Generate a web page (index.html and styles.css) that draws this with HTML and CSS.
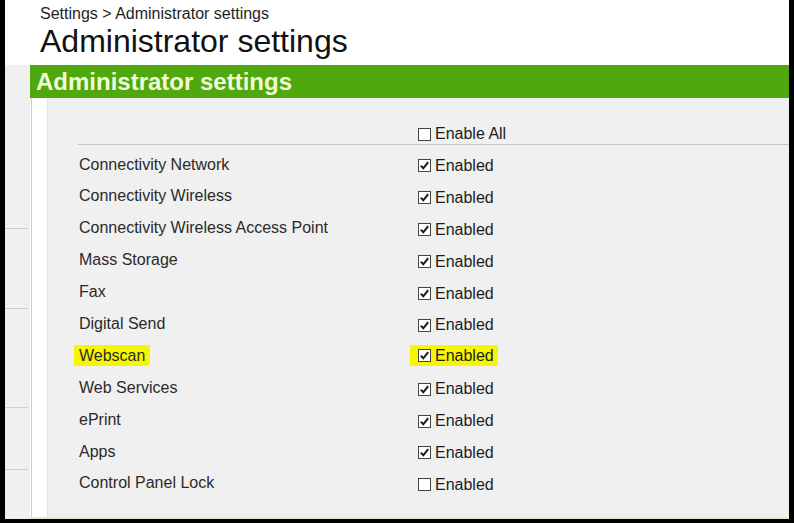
FILE: index.html
```html
<!DOCTYPE html>
<html>
<head>
<meta charset="utf-8">
<link rel="stylesheet" href="styles.css">
</head>
<body>
<div class="frame">
  <header class="top">
    <div class="crumb">Settings &gt; Administrator settings</div>
    <h1 class="title">Administrator settings</h1>
  </header>
  <div class="below">
    <nav class="side">
      <div class="side-item s1"></div>
      <div class="side-item s2"></div>
      <div class="side-item s3"></div>
      <div class="side-item s4"></div>
    </nav>
    <main class="main">
      <h2 class="bar">Administrator settings</h2>
      <div class="panel">
        <div class="strip"></div>
        <div class="content">
          <div class="list">
            <div class="row head">
              <span class="label"></span>
              <span class="opt"><svg class="cb" viewBox="0 0 13 13"><rect x="0.5" y="0.5" width="12" height="12" fill="#fff" stroke="#444"/></svg>Enable All</span>
            </div>
            <div class="row"><span class="label">Connectivity Network</span><span class="opt"><svg class="cb" viewBox="0 0 13 13"><rect x="0.5" y="0.5" width="12" height="12" fill="#fff" stroke="#444"/><path d="M2.8 6.6 L5.3 9.3 L10.2 3.2" fill="none" stroke="#1a1a1a" stroke-width="2"/></svg>Enabled</span></div>
            <div class="row"><span class="label">Connectivity Wireless</span><span class="opt"><svg class="cb" viewBox="0 0 13 13"><rect x="0.5" y="0.5" width="12" height="12" fill="#fff" stroke="#444"/><path d="M2.8 6.6 L5.3 9.3 L10.2 3.2" fill="none" stroke="#1a1a1a" stroke-width="2"/></svg>Enabled</span></div>
            <div class="row"><span class="label">Connectivity Wireless Access Point</span><span class="opt"><svg class="cb" viewBox="0 0 13 13"><rect x="0.5" y="0.5" width="12" height="12" fill="#fff" stroke="#444"/><path d="M2.8 6.6 L5.3 9.3 L10.2 3.2" fill="none" stroke="#1a1a1a" stroke-width="2"/></svg>Enabled</span></div>
            <div class="row"><span class="label">Mass Storage</span><span class="opt"><svg class="cb" viewBox="0 0 13 13"><rect x="0.5" y="0.5" width="12" height="12" fill="#fff" stroke="#444"/><path d="M2.8 6.6 L5.3 9.3 L10.2 3.2" fill="none" stroke="#1a1a1a" stroke-width="2"/></svg>Enabled</span></div>
            <div class="row"><span class="label">Fax</span><span class="opt"><svg class="cb" viewBox="0 0 13 13"><rect x="0.5" y="0.5" width="12" height="12" fill="#fff" stroke="#444"/><path d="M2.8 6.6 L5.3 9.3 L10.2 3.2" fill="none" stroke="#1a1a1a" stroke-width="2"/></svg>Enabled</span></div>
            <div class="row"><span class="label">Digital Send</span><span class="opt"><svg class="cb" viewBox="0 0 13 13"><rect x="0.5" y="0.5" width="12" height="12" fill="#fff" stroke="#444"/><path d="M2.8 6.6 L5.3 9.3 L10.2 3.2" fill="none" stroke="#1a1a1a" stroke-width="2"/></svg>Enabled</span></div>
            <div class="row"><span class="label"><span class="hl hl-label">Webscan</span></span><span class="opt"><span class="hl hl-opt"><svg class="cb" viewBox="0 0 13 13"><rect x="0.5" y="0.5" width="12" height="12" fill="#fff" stroke="#444"/><path d="M2.8 6.6 L5.3 9.3 L10.2 3.2" fill="none" stroke="#1a1a1a" stroke-width="2"/></svg>Enabled</span></span></div>
            <div class="row"><span class="label">Web Services</span><span class="opt"><svg class="cb" viewBox="0 0 13 13"><rect x="0.5" y="0.5" width="12" height="12" fill="#fff" stroke="#444"/><path d="M2.8 6.6 L5.3 9.3 L10.2 3.2" fill="none" stroke="#1a1a1a" stroke-width="2"/></svg>Enabled</span></div>
            <div class="row"><span class="label">ePrint</span><span class="opt"><svg class="cb" viewBox="0 0 13 13"><rect x="0.5" y="0.5" width="12" height="12" fill="#fff" stroke="#444"/><path d="M2.8 6.6 L5.3 9.3 L10.2 3.2" fill="none" stroke="#1a1a1a" stroke-width="2"/></svg>Enabled</span></div>
            <div class="row"><span class="label">Apps</span><span class="opt"><svg class="cb" viewBox="0 0 13 13"><rect x="0.5" y="0.5" width="12" height="12" fill="#fff" stroke="#444"/><path d="M2.8 6.6 L5.3 9.3 L10.2 3.2" fill="none" stroke="#1a1a1a" stroke-width="2"/></svg>Enabled</span></div>
            <div class="row"><span class="label">Control Panel Lock</span><span class="opt"><svg class="cb" viewBox="0 0 13 13"><rect x="0.5" y="0.5" width="12" height="12" fill="#fff" stroke="#444"/></svg>Enabled</span></div>
          </div>
        </div>
      </div>
      <div class="foot-line"></div>
    </main>
  </div>
</div>
</body>
</html>
```
FILE: styles.css
```css
html, body {
  margin: 0;
  padding: 0;
  background: #000;
}
body {
  width: 794px;
  height: 523px;
  overflow: hidden;
  font-family: "Liberation Sans", Arial, sans-serif;
}
.frame {
  margin-left: 5px;
  width: 784px;
  height: 519px;
  background: #fff;
  display: flex;
  flex-direction: column;
  overflow: hidden;
}
.top {
  height: 65px;
  flex: none;
  padding-left: 35px;
  box-sizing: border-box;
}
.crumb {
  font-size: 16px;
  line-height: 18px;
  padding-top: 5px;
  color: #1e1e1e;
}
.title {
  margin: 0;
  font-weight: normal;
  font-size: 32px;
  line-height: 36px;
  color: #111;
}
.below {
  flex: 1;
  display: flex;
  min-height: 0;
}
.side {
  width: 25px;
  flex: none;
  background: #f0f0f0;
  display: flex;
  flex-direction: column;
}
.side-item {
  border-bottom: 1px solid #cfcfcf;
  margin-right: 2px;
}
.s1 { height: 163px; }
.s2 { height: 79px; }
.s3 { height: 98px; }
.s4 { height: 61px; }
.main {
  flex: 1;
  display: flex;
  flex-direction: column;
  min-width: 0;
}
.bar {
  margin: 0;
  height: 33px;
  flex: none;
  background: #4fa90c;
  color: #f1fad6;
  font-size: 24px;
  font-weight: bold;
  line-height: 33px;
  padding-left: 6px;
}
.panel {
  flex: 1;
  display: flex;
  min-height: 0;
}
.strip {
  width: 15px;
  flex: none;
  background: #fff;
  border-left: 1px solid #cdcdcd;
  margin-left: 1px;
  border-right: 1px solid #e4e4e4;
}
.content {
  flex: 1;
  background: #f0f0f0;
  padding: 26px 0 0 30px;
}
.list {
  display: flex;
  flex-direction: column;
}
.row {
  display: grid;
  grid-template-columns: 340px 1fr;
  height: 31.9px;
  line-height: 31.9px;
  font-size: 16px;
  color: #2a2a2a;
  align-items: center;
}
.row.head {
  height: 20px;
  line-height: 20px;
  border-bottom: 1px solid #c6c6c6;
  margin-bottom: 2px;
}
.label {
  padding-left: 1px;
  white-space: nowrap;
}
.opt {
  display: flex;
  align-items: center;
  color: #1c1c1c;
  white-space: nowrap;
  padding-top: 3px;
}
.row.head .opt {
  padding-top: 0;
}
.cb {
  width: 13px;
  height: 13px;
  margin-right: 4px;
  flex: none;
}
.hl {
  background: #f6f600;
  line-height: 21px;
  border-radius: 2px;
}
.hl-label {
  margin-left: -5px;
  padding: 0 5px;
  display: inline-block;
  vertical-align: middle;
}
.hl-opt {
  display: flex;
  align-items: center;
  margin-left: -8px;
  padding: 0 4px 0 8px;
}
.foot-line {
  height: 2px;
  flex: none;
  background: #d8f5b4;
}
```
